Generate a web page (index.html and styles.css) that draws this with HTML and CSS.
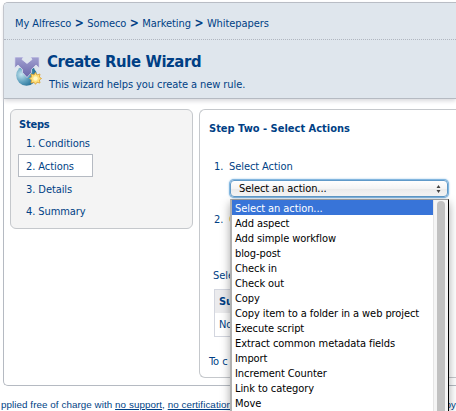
FILE: index.html
```html
<!DOCTYPE html>
<html lang="en">
<head>
<meta charset="utf-8">
<title>Create Rule Wizard</title>
<link rel="stylesheet" href="styles.css">
</head>
<body>
<div class="frame">
  <header class="header">
    <nav class="crumbs"><span>My Alfresco</span><b>&gt;</b><span>Someco</span><b>&gt;</b><span>Marketing</span><b>&gt;</b><span class="last">Whitepapers</span></nav>
    <div class="title">
      <svg class="logo" width="28" height="32" viewBox="0 0 28 32">
        <defs>
          <radialGradient id="ball" cx=".25" cy=".45" r=".75"><stop offset="0" stop-color="#c5e5ef"/><stop offset=".5" stop-color="#5d9fbd"/><stop offset="1" stop-color="#17658d"/></radialGradient>
          <linearGradient id="arrow" x1="0" x2="0" y1="0" y2="1"><stop offset="0" stop-color="#a3a1d2"/><stop offset="1" stop-color="#6865a8"/></linearGradient>
        </defs>
        <circle cx="12.500" cy="19.500" r="10.300" fill="url(#ball)"/>
        <path d="M.8 1H9.500L8 3.500L13 7.500L18 3.500L16.500 1H25.200V12L22 9L17.500 13.500V16.500L13 21.500L8.500 16.500V13.500L4 9L.8 12Z" fill="url(#arrow)" stroke="#e5e8f5" stroke-width=".7"/>
        <path d="M21.500 16.500L23 19L26 18L25.300 21L27.500 22.500L25.300 24L26 27L23 26.200L21.500 28.300L20 26.200L17 27L17.700 24L15.500 22.500L17.700 21L17 18L20 19Z" fill="#ffe07a" stroke="#dca63c" stroke-width=".9"/>
        <circle cx="21.500" cy="22.500" r="2.200" fill="#fff8c8"/>
      </svg>
      <div>
        <h1>Create Rule Wizard</h1>
        <p>This wizard helps you create a new rule.</p>
      </div>
    </div>
  </header>
  <main class="body">
    <aside class="steps">
      <h2>Steps</h2>
      <ol>
        <li>1. Conditions</li>
        <li class="current">2. Actions</li>
        <li>3. Details</li>
        <li>4. Summary</li>
      </ol>
    </aside>
    <section class="panel">
      <h2>Step Two - Select Actions</h2>
      <div class="row"><span>1.</span><span class="sel-label">Select Action</span></div>
      <div class="select">
        <div class="control"><span>Select an action...</span>
          <svg width="5" height="8" viewBox="0 0 5 8"><path d="M2.500 0L4.500 3H.5ZM2.500 8L4.500 5H.5Z" fill="#444"/></svg>
        </div>
        <div class="menu">
          <ul>
            <li class="on">Select an action...</li>
            <li>Add aspect</li>
            <li>Add simple workflow</li>
            <li>blog-post</li>
            <li>Check in</li>
            <li>Check out</li>
            <li>Copy</li>
            <li>Copy item to a folder in a web project</li>
            <li>Execute script</li>
            <li>Extract common metadata fields</li>
            <li>Import</li>
            <li>Increment Counter</li>
            <li>Link to category</li>
            <li>Move</li>
          </ul>
          <div class="track"><div class="thumb"></div></div>
        </div>
      </div>
      <div class="row second"><span>2.</span><span class="hint">C</span></div>
      <p class="selected">Sele</p>
      <div class="table"><b>Su</b><span>No</span></div>
      <p class="tocont">To c</p>
    </section>
  </main>
</div>
<footer><span class="free">pplied free of charge with <u>no support</u>, <u>no certification</u></span><span>by</span></footer>
</body>
</html>
```
FILE: styles.css
```css
* { box-sizing: border-box; margin: 0; padding: 0; }
body {
  width: 456px; height: 411px; overflow: hidden; background: #fff;
  font: 11px/15px "DejaVu Sans Condensed", "DejaVu Sans", sans-serif;
  font-stretch: condensed; letter-spacing: -.08px; color: #003f85; padding: 2px 0 0 3px;
}
.frame {
  height: 384px; border: 1px solid #b5bac2; border-right: 0;
  border-radius: 5px 0 0 5px;
}
.header {
  height: 96px; background: #dfe6ed; border-bottom: 1px solid #b5bac2;
  border-radius: 4px 0 0 0; box-shadow: 0 2px 4px #d8d8dc;
}
.crumbs {
  height: 37px; padding: 13px 0 0 11px; border-bottom: 1px dotted #b0b6c0;
  display: flex; white-space: nowrap;
}
.crumbs b { width: 16px; text-align: center; font-size: 12px; }
.title { display: flex; padding: 14px 0 0 10px; }
.logo { margin-top: 2px; flex: none; }
.title > div { padding-left: 5px; }
h1 { font-size: 16.500px; line-height: 15px; font-weight: bold; letter-spacing: -.38px; white-space: nowrap; }
.title p { padding: 8px 0 0 2px; white-space: nowrap; }
.body { display: flex; padding: 10px 0 0 6px; gap: 6px; }
.steps {
  width: 183px; height: 120px; flex: none; background: #f4f4f4;
  border: 1px solid #c5c8cc; border-radius: 6px; padding: 7px;
}
h2 { font-size: 11px; line-height: 15px; font-weight: bold; letter-spacing: 0; white-space: nowrap; }
.steps h2 { padding-left: 1px; letter-spacing: -.2px; }
.steps ol { list-style: none; }
.steps li { height: 22px; padding: 4px 8px 0; }
.steps li.current { width: 75px; height: 23px; margin-bottom: 1px; padding-left: 7px; background: #fff; border: 1px solid #b5bac2; }
.panel {
  flex: 1; height: 269px; border: 1px solid #c5c8cc; border-right: 0;
  border-radius: 6px 0 0 6px; padding: 11px 0 0 9px; white-space: nowrap;
}
.row { display: flex; margin: 23px 0 0 5px; }
.row span:first-child { width: 15px; }
.select { position: relative; width: 218px; height: 18px; margin: 6px 0 0 21px; color: #000; z-index: 2; }
.control {
  height: 17px; display: flex; align-items: center; justify-content: space-between;
  padding: 0 6px 0 8px; border: 1px solid #609ac9; border-radius: 4px;
  background: linear-gradient(#fff, #f4f4f4 50%, #e9e9e9 51%, #f7f7f7);
  box-shadow: 0 0 0 1px #82b6df, 0 0 2px 1px #9ac5e7;
}
.menu {
  position: absolute; left: 0; top: 19px; width: 219px; height: 212px;
  display: flex; background: #fff; border: 1px solid #999; border-bottom: 0;
  border-left: 2px solid #b0b0b0; border-right: 1px solid #000;
  box-shadow: 0 4px 9px rgba(0,0,0,.35);
}
.menu ul { list-style: none; width: 201px; flex: none; }
.menu li { height: 15px; line-height: 17px; padding-left: 3px; }
.menu .on { background: #3874d8; color: #fff; }
.track { flex: 1; background: #f5f5f5; border-left: 1px solid #e5e5e5; padding: 1px 3px 0; }
.thumb { height: 210px; background: #c1c1c1; border-radius: 5px 5px 0 0; }
.second { margin-top: 14px; }
.hint { color: #d19b4d; }
.selected { margin: 41px 0 0 4px; }
.table { width: 230px; height: 48px; margin: 6px 0 0 5px; border: 1px solid #d3d6df; }
.table b, .table span { display: block; padding: 4px; height: 23px; }
.table b { background: #ebebed; }
.tocont { margin-top: 17px; }
footer {
  font: 9.800px/13px "Liberation Sans", sans-serif; letter-spacing: .07px; display: flex;
  margin: 12px 0 0 -2px; white-space: nowrap;
}
.free { width: 448px; }
```
